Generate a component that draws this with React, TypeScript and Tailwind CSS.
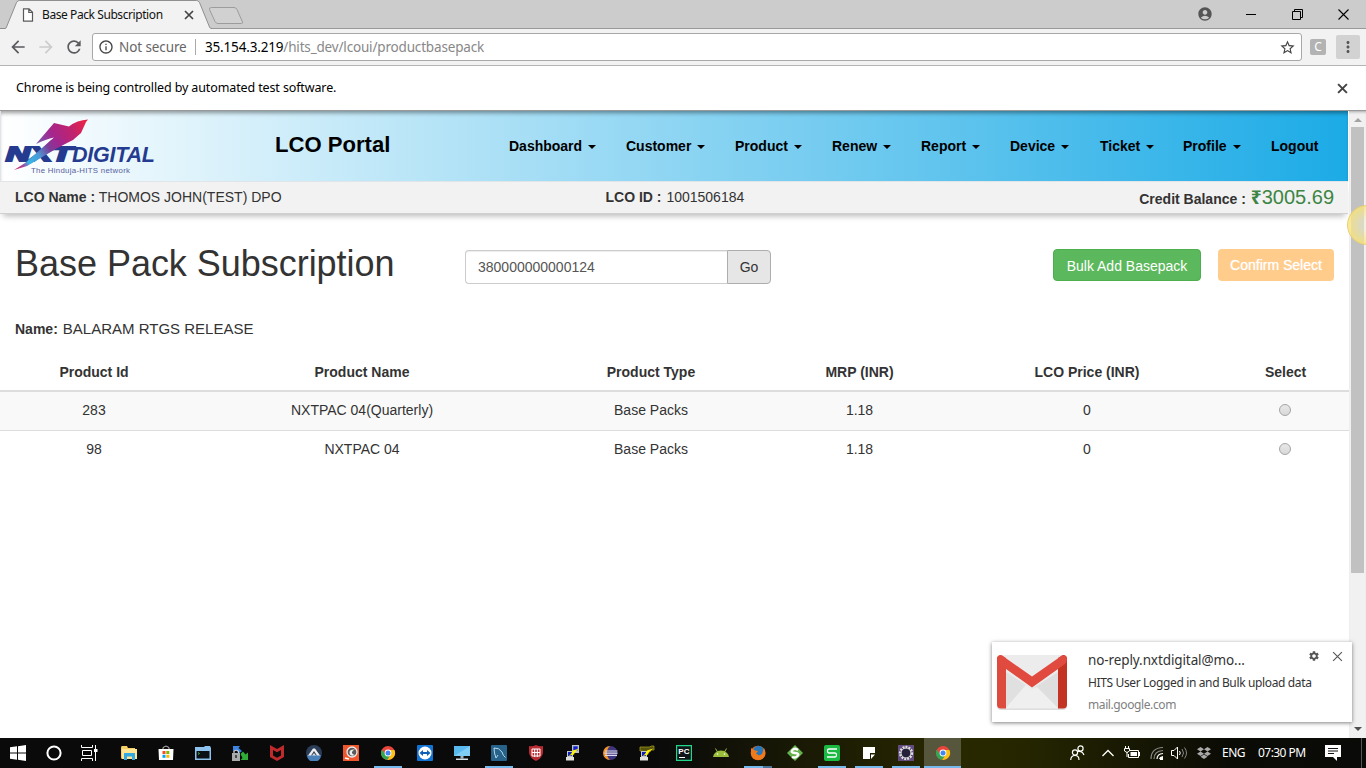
import React from "react";
import { FaDropbox } from "react-icons/fa";
import { MdAccountCircle, MdSettings, MdRefresh, MdInfoOutline, MdArrowBack, MdArrowForward, MdMoreVert, MdStarBorder } from "react-icons/md";

const segoe = "font-['Noto_Sans','Open_Sans',sans-serif]";

function Cross({ size, w, color }: { size: number; w: number; color: string }) {
  return (
    <svg width={size} height={size} viewBox="0 0 10 10" className="shrink-0">
      <path d="M1 1 9 9M9 1 1 9" stroke={color} strokeWidth={w} fill="none" />
    </svg>
  );
}

function TabStrip() {
  return (
    <div className="relative flex h-[29px] shrink-0 items-center bg-[#cccccc]">
      <svg className="absolute inset-0" width="1366" height="29" viewBox="0 0 1366 29">
        <path d="M0 28.5H1366" stroke="#999" />
        <path d="M5 29 6 28 16.500 2.500Q17.500 .5 19.500 .5H196.500Q198.500 .5 199.500 2.500L210 28 212 29Z" fill="#f2f2f2" />
        <path d="M0 28.500H5Q6 28.500 6.500 27L16.500 2.500Q17.500 .5 19.500 .5H196.500Q198.500 .5 199.500 2.500L209.500 27Q210 28.500 212 28.500" fill="none" stroke="#8f8f8f" />
        <path d="M211.500 7.500H234Q236 7.500 237 9.500L242.500 22Q243 23.500 241.500 23.500H218Q216 23.500 215 21.500L209.500 9.500Q209 7.500 211.500 7.500Z" fill="#d1d1d1" stroke="#9c9c9c" />
      </svg>
      <div className="relative flex w-full items-center pb-px pl-[22px]">
        <svg width="12" height="14" viewBox="0 0 12 14" className="mt-px">
          <path d="M1.500 .8H7L10.500 4.300V13.200H1.500ZM6.800 1V4.500H10.500" fill="#fff" stroke="#5a5a5a" strokeWidth="1.200" />
        </svg>
        <span className={`ml-2 mt-[2px] w-[142px] text-[12px] leading-5 tracking-[-0.42px] whitespace-nowrap text-[#111] ${segoe}`}>Base Pack Subscription</span>
        <span className="mt-[2px]"><Cross size={10} w={1.7} color="#444" /></span>
        <div className="ml-auto flex items-center pr-[17px]">
          <MdAccountCircle className="size-4 text-[#555]" />
          <svg className="ml-[33px]" width="10" height="11"><path d="M0 5.500H10" stroke="#000" /></svg>
          <svg className="ml-[36px]" width="11" height="11" viewBox="0 0 11 11">
            <path d="M.5 2.500H8.500V10.500H.5ZM2.500 2V.5H10.500V8.500H9" fill="none" stroke="#000" />
          </svg>
          <svg className="ml-[35px]" width="11" height="11" viewBox="0 0 11 11">
            <path d="M.5 .5 10.500 10.500M10.500 .5 .5 10.500" stroke="#000" strokeWidth="1.100" />
          </svg>
        </div>
      </div>
    </div>
  );
}

function Toolbar() {
  return (
    <div className={`flex h-[37px] shrink-0 items-center border-b border-[#b4b4b4] bg-[#f2f2f2] pl-2 pr-1.5 ${segoe}`}>
      <MdArrowBack className="size-5 text-[#5a5a5f]" />
      <MdArrowForward className="ml-2 size-5 text-[#ccc]" />
      <MdRefresh className="ml-2 size-5 text-[#5a5a5f]" />
      <div className="ml-2 flex h-7 w-[1210px] items-center rounded-[3px] border border-[#a8a8a8] bg-white pl-[5px] pr-[5px] text-[13.500px]">
        <MdInfoOutline className="size-4 text-[#444]" />
        <span className="ml-[5px] w-[76px] whitespace-nowrap tracking-[-0.1px] text-[#666]">Not secure</span>
        <span className="mr-[9px] h-4 w-px bg-[#aaa]" />
        <span className="whitespace-nowrap tracking-[-0.17px] text-[#888]"><span className="text-black">35.154.3.219</span>/hits_dev/lcoui/productbasepack</span>
        <MdStarBorder className="ml-auto size-[17px] text-[#444]" />
      </div>
      <div className="ml-2 flex size-4 items-center justify-center rounded-[2px] bg-[#b3b3b3] text-[12px] text-white">C</div>
      <div className="ml-auto flex size-6 items-center justify-center rounded-[2px] bg-[#d2d2d2]">
        <MdMoreVert className="size-[18px] text-[#555]" />
      </div>
    </div>
  );
}

function Logo() {
  return (
    <svg width="170" height="68" viewBox="0 112 170 68" className="block">
      <defs>
        <linearGradient id="bird" x1="36" y1="150" x2="88" y2="121" gradientUnits="userSpaceOnUse">
          <stop offset="0" stopColor="#6a6bb5" />
          <stop offset=".35" stopColor="#a3268f" />
          <stop offset=".7" stopColor="#c2236b" />
          <stop offset="1" stopColor="#f02440" />
        </linearGradient>
        <linearGradient id="tail" x1="14" y1="170" x2="56" y2="140" gradientUnits="userSpaceOnUse">
          <stop offset="0" stopColor="#e0245b" />
          <stop offset=".2" stopColor="#a04aa0" />
          <stop offset=".32" stopColor="#35b6e9" />
          <stop offset=".55" stopColor="#4b9bd6" />
          <stop offset=".8" stopColor="#7d3c98" />
          <stop offset="1" stopColor="#a3268f" />
        </linearGradient>
      </defs>
      <g fill="#253b90" stroke="#253b90" fontFamily="Liberation Sans, sans-serif" fontWeight="bold" fontStyle="italic">
        <text x="6" y="161" fontSize="19.500" textLength="66" lengthAdjust="spacingAndGlyphs" strokeWidth="2">NXT</text>
        <text x="72" y="161.800" fontSize="21.500" textLength="83" lengthAdjust="spacing" strokeWidth="0">DIGITAL</text>
      </g>
      <path d="M36 144 54 123 69 126.500Q77 120 88 119.500L86 122 81 133 73 140 49 152 30 164 50 141 54 137.500Q46 139 36 144Z" fill="url(#bird)" />
      <path d="M14 170 25 163 50 141 56 137 66 143 49 153 27 166Z" fill="url(#tail)" />
      <text x="31" y="172.500" fontSize="7.800" fill="#5560a0" fontFamily="Liberation Sans, sans-serif" textLength="99" lengthAdjust="spacing">The Hinduja-HITS network</text>
    </svg>
  );
}

const menu: [string, string][] = [
  ["Dashboard", "w-[117px]"],
  ["Customer", "w-[109px]"],
  ["Product", "w-[97px]"],
  ["Renew", "w-[89px]"],
  ["Report", "w-[89px]"],
  ["Device", "w-[90px]"],
  ["Ticket", "w-[83px]"],
  ["Profile", "w-[88px]"],
];

function Header() {
  return (
    <header className="mr-px flex h-[71px] shrink-0 border-b border-l border-[#dfe5e8] bg-[linear-gradient(90deg,#ffffff,#1cabe6)] shadow-[inset_0_4px_4px_-2px_rgba(0,0,0,0.4)]">
      <div className="-ml-px w-[274px] pt-px"><Logo /></div>
      <div className="w-[235px] pl-px pt-[18px] text-[22.100px] leading-8 font-bold text-black">LCO Portal</div>
      <nav className="flex items-start pt-[25px] text-[14px] leading-5 font-bold text-black">
        {menu.map(([m, w]) => (
          <div key={m} className={`flex items-center ${w}`}>
            {m}
            <span className="ml-[6px] mt-[2px] border-x-4 border-t-4 border-x-transparent border-t-black" />
          </div>
        ))}
        <div>Logout</div>
      </nav>
    </header>
  );
}

const rows = [
  ["283", "NXTPAC 04(Quarterly)", "Base Packs", "1.18", "0"],
  ["98", "NXTPAC 04", "Base Packs", "1.18", "0"],
];
const cols = "grid grid-cols-[188px_348px_230px_187px_268px_129px] text-center text-[14px] leading-5";

function Page() {
  return (
    <main className="flex min-w-0 flex-1 flex-col overflow-hidden bg-white font-['Liberation_Sans',Arial,sans-serif] text-[14px] text-[#333]">
      <Header />
      <section className="mr-px flex h-8 shrink-0 items-start border-b border-[#d0d0d0] bg-[#f2f2f2] pt-[5px] pl-[15px] pr-[14px] leading-5 shadow-[0_5px_6px_-3px_rgba(0,0,0,0.28)]">
        <div className="w-[590.500px]"><b>LCO Name :</b> THOMOS JOHN(TEST) DPO</div>
        <div><b>LCO ID :</b> <span className="ml-px">1001506184</span></div>
        <div className="ml-auto flex items-baseline"><b className="mr-[5px]">Credit Balance :</b><span className="text-[20px] text-[#3c8544]"><span className="font-['Noto_Sans',sans-serif] text-[19px] leading-5 font-bold">₹</span>3005.69</span></div>
      </section>
      <section className="flex h-[94px] shrink-0 pl-[15px] pr-[15px]">
        <h1 className="w-[450px] pt-[30px] text-[36px] leading-10 tracking-[-0.03px]">Base Pack Subscription</h1>
        <div className="mt-9 flex h-[34px] w-[306px]">
          <div className="flex flex-1 items-center rounded-l-[4px] border border-r-0 border-[#ccc] pl-3 text-[#555] shadow-[inset_0_1px_1px_rgba(0,0,0,0.075)]">380000000000124</div>
          <button className="w-[44px] rounded-r-[4px] border border-[#adadad] bg-[#e6e6e6]">Go</button>
        </div>
        <div className="ml-auto mt-[35px] flex h-8 text-white">
          <button className="w-[148px] rounded-[4px] border border-[#4cae4c] bg-[#5cb85c] pt-[2px]">Bulk Add Basepack</button>
          <button className="ml-[17px] w-[116px] rounded-[4px] bg-[#ffcc8b] text-shadow-[0_0_1px_rgba(255,255,255,0.8)]">Confirm Select</button>
        </div>
      </section>
      <div className="h-[47px] shrink-0 pl-[15px] pt-[11px] text-[15px] leading-5"><b className="mr-[5px] text-[14px]">Name:</b>BALARAM RTGS RELEASE</div>
      <section>
        <div className={`${cols} h-[37px] border-b-2 border-[#ddd] pt-[7px] font-bold`}>
          <div>Product Id</div><div>Product Name</div><div>Product Type</div><div>MRP (INR)</div><div>LCO Price (INR)</div><div>Select</div>
        </div>
        {rows.map((r, i) => (
          <div key={r[0]} className={`${cols} pt-2 ${i === 0 ? "h-[39px] border-b border-[#ddd] bg-[#f9f9f9]" : "h-[38px]"}`}>
            {r.map((c, j) => <div key={j}>{c}</div>)}
            <div className="flex justify-center pt-1 pr-px"><span className="size-3 rounded-full border border-[#a4a4a4] bg-linear-to-b from-[#e8e8e8] to-[#d8d8d8]" /></div>
          </div>
        ))}
      </section>
    </main>
  );
}

function Scrollbar() {
  return (
    <div className="flex w-[17px] shrink-0 flex-col items-center bg-[#f1f1f1] pt-[7px] shadow-[inset_0_3px_3px_-2px_rgba(0,0,0,0.3)]">
      <span className="ml-px border-x-4 border-b-4 border-x-transparent border-b-[#a3a3a3]" />
      <div className="mt-[5px] h-[446px] w-[13px] bg-[#c1c1c1]" />
      <span className="mt-auto mb-[7px] ml-px border-x-4 border-t-4 border-x-transparent border-t-[#505050]" />
    </div>
  );
}

function Notification() {
  return (
    <aside className={`absolute left-[992px] top-[642px] flex h-20 w-[360px] bg-white shadow-[0_1px_4px_rgba(0,0,0,0.5)] ${segoe}`}>
      <svg width="80" height="80" viewBox="0 0 80 80">
        <rect x="5" y="15" width="70" height="53" rx="4" fill="#c8c8c8" opacity=".6" />
        <rect x="5" y="13" width="70" height="53.500" rx="4" fill="#ececec" />
        <path d="M14 30 34 43 14 66Z" fill="#e0e0e0" />
        <path d="M34 43 40 47 66 30V66H58Z" fill="#dedede" />
        <path d="M14 66 34 43 40 47 45 45 66 66Z" fill="#efefef" />
        <path d="M5 17Q5 13 9 13L14 16V66.500H9Q5 66.500 5 62.500Z" fill="#dc4b3e" />
        <path d="M75 17Q75 13 71 13L66 16V66.500H71Q75 66.500 75 62.500Z" fill="#c23321" />
        <path d="M5 17Q5 13 10 13.500L40 34.500 70 13.500Q75 13 75 17 75 20 73 22L40 45.500 7 22Q5 20 5 17Z" fill="#e04a3f" />
      </svg>
      <div className="flex w-[226px] flex-col whitespace-nowrap pl-4 pt-[9px]">
        <span className="text-[13.500px] leading-[18px] tracking-[-0.1px] text-[#333]">no-reply.nxtdigital@mo...</span>
        <span className="mt-[5px] text-[12px] leading-[18px] tracking-[-0.36px] text-[#333]">HITS User Logged in and Bulk upload data</span>
        <span className="mt-1 text-[12px] leading-[18px] tracking-[-0.4px] text-[#808080]">mail.google.com</span>
      </div>
      <div className="ml-[10px] flex pt-[8px]">
        <MdSettings className="size-[12px] text-[#555]" />
        <span className="ml-3 mt-px"><Cross size={11} w={1} color="#555" /></span>
      </div>
    </aside>
  );
}

function Chrome() {
  return (
    <g>
      <circle cx="8" cy="8" r="7" fill="#e8453c" />
      <path d="M1.900 4.600A7 7 0 0 0 7.300 15L10.500 9.500 8 8 5 9Z" fill="#33a852" />
      <path d="M14.400 5A7 7 0 0 1 7.300 15L11 9 10 5Z" fill="#fbc116" />
      <circle cx="8" cy="8" r="3.400" fill="#fff" />
      <circle cx="8" cy="8" r="2.500" fill="#4285f4" />
    </g>
  );
}

function Putty({ alt }: { alt?: boolean }) {
  return (
    <g>
      {alt ? (
        <path d="M1 2H11L12 1H15V5H12L11 7 1 6Z" fill="#55530c" stroke="#9a971a" strokeWidth=".8" />
      ) : (
        <g><path d="M7 0H14V8H7Z" fill="#b9c0c8" /><path d="M8.300 1.300H12.700V5.500H8.300Z" fill="#1020d0" /></g>
      )}
      <path d="M2 6H8V12H2Z" fill="#c4c8cc" />
      <path d="M3 7H7V11H3Z" fill="#1020c0" />
      <path d="M1 12H9V15.500H1Z" fill="#e0e0d8" />
      <path d="M14 3.500 8 5.500 6 9 3.500 11 9 9.500 10 7Z" fill="#fff200" />
    </g>
  );
}

const icons: React.ReactNode[] = [
  <g><path d="M0 3Q0 1 1 1H6L7 3H14V14H1Q0 14 0 12Z" fill="#f5cf63" /><path d="M1 4H16V14H1Z" fill="#ffe594" /><path d="M3 8H14V15H11V11.500H6V15H3Z" fill="#35a8e0" /></g>,
  <g><path d="M5 5V2.500Q8-.5 11 2.500V5" fill="none" stroke="#bbb" /><path d="M.5 4H15.500L15 15H1Z" fill="#fff" /><path d="M4.500 6H7.500V9H4.500Z" fill="#f25022" /><path d="M8.300 6H11.300V9H8.300Z" fill="#7fba00" /><path d="M4.500 9.800H7.500V12.800H4.500Z" fill="#00a4ef" /><path d="M8.300 9.800H11.300V12.800H8.300Z" fill="#ffb900" /></g>,
  <g><path d="M0 2H9L10 1H15L16 3V15H0Z" fill="#8dc2ee" /><path d="M1.500 6H14.500V13.500H1.500Z" fill="#0b1116" /><path d="M3 7.500 4.500 8.500 3 9.500" stroke="#48e05b" fill="none" strokeWidth=".8" /></g>,
  <g><path d="M1 1H8L6.500 3 10 6 7.500 8 4 5 1 7Z" fill="#3b84e0" /><path d="M8.500 9 11 6.500 13.500 9.500 16 7.500V15H8.500L10.500 13Z" fill="#2eae36" /><path d="M2 8V6.500Q4 4 6.500 6.500V8" fill="none" stroke="#ccc" strokeWidth="1.200" /><path d="M0 8H8V16H0Z" fill="#a7abad" /><path d="M4 10V13" stroke="#222" strokeWidth="1.400" /></g>,
  <path d="M1 0 8 4 15 0V12L8 16 1 12ZM4 5V10.500L8 12.700 12 10.500V5L8 7.300Z" fill="#bf2a2d" fillRule="evenodd" />,
  <g><circle cx="8" cy="8" r="8" fill="#2b3d57" /><path d="M1 10A7 7 0 0 0 15 10Z" fill="#4a80b8" /><path d="M2 10.500 7 3.500H9L14 10.500H11L8 6 5 10.500Z" fill="#eee" /><path d="M6 10.500 8 8 10 10.500" fill="#ddd" /></g>,
  <g><path d="M0 0H16V16H0Z" fill="#f0562b" /><circle cx="9" cy="7" r="5" fill="#5a5a5a" stroke="#eee" strokeWidth="1.300" /><path d="M12 4.500Q6 4 6.500 8T12 10Q8.500 9 9 7T12 4.500Z" fill="#eee" /><path d="M2 13 6 14" stroke="#fff" strokeWidth="1.500" /></g>,
  <Chrome />,
  <g><rect width="16" height="16" rx="1" fill="#1173d4" /><circle cx="8" cy="8" r="6.500" fill="#fff" /><path d="M2.500 8 6 5V7H10V5L13.500 8 10 11V9H6V11Z" fill="#0e5fb5" /></g>,
  <g><path d="M0 1H16V11H0Z" fill="#57b9ee" /><path d="M0 11 16 1V11Z" fill="#7fcdf5" /><path d="M6.500 11H9.500V13.500H6.500Z" fill="#9cb4c2" /><path d="M2 13.500H14V15H2Z" fill="#d5dfe6" /></g>,
  <g><rect width="16" height="16" rx="1" fill="#27628b" /><path d="M5 13Q3 8 3 3 8 2.500 11 7 12 11 14.500 12.500M5 13 7 10" fill="none" stroke="#b7d9e9" /></g>,
  <g><path d="M8 0Q12 2 15 1V8Q14 13 8 16 2 13 1 8V1Q4 2 8 0Z" fill="#b92b32" /><path d="M4 4H12V11H4ZM4 7.500H12M6.700 4V12M9.300 4V12" fill="none" stroke="#fff" /></g>,
  <Putty />,
  <g><circle cx="8.500" cy="8" r="7" fill="#40367f" /><path d="M8 1A7 7 0 0 0 8 15 9 9 0 0 1 5 8 9 9 0 0 1 8 1Z" fill="#ef9428" /><path d="M3 6H15.500M2.500 8.200H15.500M3 10.400H15" stroke="#dedbed" strokeWidth="1.200" /></g>,
  <Putty alt />,
  <g><path d="M.6 .6H15.400V15.400H.6Z" fill="#10151a" stroke="#21d789" strokeWidth="1.200" /><text x="2.300" y="9" fill="#fff" fontSize="8" fontWeight="bold" fontFamily="Liberation Sans, sans-serif">PC</text><path d="M3 12.500H9" stroke="#fff" /></g>,
  <g><path d="M0 12Q1 6 8 5.500 15 6 16 12Z" fill="#9abe3c" /><path d="M2.500 3.500 4.500 7M13.500 3.500 11.500 7" stroke="#9abe3c" /><circle cx="4.500" cy="9" r=".8" fill="#fff" /><circle cx="11.500" cy="9" r=".8" fill="#fff" /></g>,
  <g><circle cx="8" cy="8" r="7.300" fill="#e66b17" /><circle cx="8.500" cy="6" r="5.300" fill="#2676bc" /><path d="M1 3 5 5.500 8 6 6 8.500 9 10.500 12 9 14 3Q18 11 11 14.500 3 16 1 9Z" fill="#ee7a1c" /></g>,
  <g><path d="M8 0 16 8 8 16 0 8Z" fill="#66b34d" /><path d="M11 5Q8 2.500 5.500 5T8 8 10.500 11 5 12" fill="none" stroke="#fff" strokeWidth="2.400" /></g>,
  <g><rect width="16" height="16" rx="2" fill="#1bbb43" /><path d="M13 4H5Q3.500 4 3.500 6T5 8H11Q12.500 8 12.500 10T11 12H3" fill="none" stroke="#fff" strokeWidth="1.300" /></g>,
  <g><path d="M2 2H14V8H9V14H2Z" fill="#fff" /><path d="M10 14V9.500H14Z" fill="#fff" /></g>,
  <g><path d="M0 0H16V16H0Z" fill="#614a7d" /><circle cx="8" cy="8" r="6" fill="#26203b" stroke="#ddd" strokeWidth="2.300" strokeDasharray="2 1" /><circle cx="8" cy="8" r="5" fill="none" stroke="#ddd" /></g>,
  <Chrome />,
];
const running = [7, 10, 17, 19, 20, 21];

function Taskbar() {
  return (
    <footer className={`flex h-[30px] shrink-0 bg-[linear-gradient(90deg,#0a0a0a_0%,#0a0a0a_48%,#292900_70%,#252600_75%,#0b0b06_90%,#0a0a08_100%)] text-white ${segoe}`}>
      <div className="mr-px flex w-[109px] items-center justify-between pl-[10px] pr-[11px]">
        <svg width="16" height="16" viewBox="0 0 16 16"><path d="M0 2.300 7 1.300V7.600H0ZM8 1.200 16 0V7.600H8ZM0 8.400H7V14.700L0 13.700ZM8 8.400H16V16L8 14.800Z" fill="#fff" /></svg>
        <svg width="16" height="16"><circle cx="8" cy="8" r="6.600" fill="none" stroke="#fff" strokeWidth="2" /></svg>
        <svg width="17" height="16" viewBox="0 0 17 16"><path d="M.5 0V2.500H11.500V0M.5 16V13.500H11.500V16M1.500 5.500H10.500V10.500H1.500ZM14.500 0V16" fill="none" stroke="#fff" /><path d="M13 4H16.500V7H13Z" fill="#fff" /></svg>
      </div>
      {icons.map((icon, i) => (
        <div key={i} className={`relative flex w-[37px] items-center justify-center ${i === 22 ? "bg-[#55563c]" : ""}`}>
          <svg width="16" height="16" viewBox="0 0 16 16">{icon}</svg>
          {running.includes(i) && <span className="absolute bottom-0 left-[5px] h-[2px] w-[28px] bg-[#76b9ed]" />}
          {i === 17 && <span className="absolute bottom-0 left-6 h-[2px] w-[9px] bg-[#4a7597]" />}
          {i === 22 && <span className="absolute bottom-0 left-0 h-[2px] w-full bg-[#76b9ed]" />}
        </div>
      ))}
      <div className="ml-auto flex items-center text-[12px]">
        <svg width="15" height="16" viewBox="0 0 15 16"><g fill="none" stroke="#fff" strokeWidth="1.200"><circle cx="5" cy="7.500" r="2.600" /><path d="M.7 15Q1 10.500 5 10.500T9 15M8 6.500Q12 5.500 14 10" /><circle cx="10.500" cy="3.500" r="2.600" /></g></svg>
        <svg className="ml-[17px]" width="12" height="8" viewBox="0 0 12 8"><path d="M.5 7 6 1.500 11.500 7" fill="none" stroke="#fff" strokeWidth="1.300" /></svg>
        <svg className="ml-[10px]" width="16" height="14" viewBox="0 0 16 14"><path d="M6 4.500H14.500V11.500H4.500V8M15.500 6V10M1.500 0V2M4.500 0V2M.5 2.500H5.500V5L3 6.500.5 5ZM3 6V11" fill="none" stroke="#fff" /><path d="M6.500 6H13V10H6.500Z" fill="#fff" /></svg>
        <svg className="ml-[10px]" width="14" height="14" viewBox="0 0 14 14"><g fill="none" strokeWidth="1.200"><path d="M1 13Q1 2 13 1.500M4 13Q4 5 13 4.500" stroke="#888" /><path d="M7 13Q7 8 13 7.500M9.500 13Q10 11 13 10.500" stroke="#fff" /></g><path d="M10 11H13V14H10Z" fill="#fff" /></svg>
        <svg className="ml-[7px]" width="18" height="14" viewBox="0 0 18 14"><path d="M.5 4.500H3L6.500 1V13L3 9.500H.5Z" fill="none" stroke="#fff" /><path d="M8.500 5Q10 7 8.500 9" fill="none" stroke="#fff" /><path d="M11 3Q14 7 11 11M13.500 1.500Q17.500 7 13.500 12.500" fill="none" stroke="#888" /></svg>
        <FaDropbox className="ml-[8px] size-[14px] text-[#aaa]" />
        <span className="ml-[11px] w-[36px] tracking-[-0.5px]">ENG</span>
        <span className="w-[67px] whitespace-nowrap tracking-[-0.55px]">07:30 PM</span>
        <svg width="16" height="16" viewBox="0 0 16 16"><path d="M0 0H16V12H12V16L8 12H0Z" fill="#fff" /><path d="M3 3.500H13M3 6H13M3 8.500H9" stroke="#111" /></svg>
        <span className="ml-5 mr-1 h-[30px] w-px bg-[#555]" />
      </div>
    </footer>
  );
}

export default function App() {
  return (
    <div className="relative flex h-[768px] w-[1366px] flex-col overflow-hidden bg-white">
      <TabStrip />
      <Toolbar />
      <div className={`flex h-[45px] shrink-0 items-center justify-between border-b border-[#999] bg-white pl-4 pr-[18px] text-[12.500px] tracking-[-0.12px] text-black ${segoe}`}>
        <span className="pt-px">Chrome is being controlled by automated test software.</span>
        <Cross size={11} w={1.8} color="#444" />
      </div>
      <div className="flex min-h-0 flex-1"><Page /><Scrollbar /></div>
      <Taskbar />
      <div className="absolute left-[1347px] top-[205px] h-10 w-[19px] overflow-hidden"><div className="size-10 rounded-full border border-[#e9ce74] bg-[radial-gradient(circle,rgba(245,240,200,0.5)_20%,rgba(250,229,120,0.8)_70%)]" /></div>
      <Notification />
    </div>
  );
}
